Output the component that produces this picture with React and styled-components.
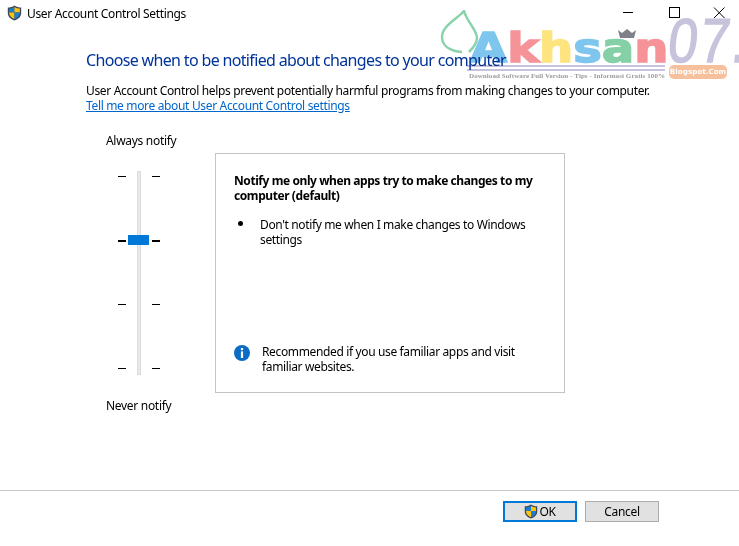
import React from "react";
import styled, { createGlobalStyle } from "styled-components";

const GlobalStyle = createGlobalStyle`
  html, body {
    margin: 0;
    background: #fff;
  }
  body {
    font-family: "Noto Sans", "Open Sans", "Liberation Sans", sans-serif;
    font-size: 12px;
    color: #000;
  }
`;

const Window = styled.div`
  position: relative;
  width: 739px;
  height: 546px;
  overflow: hidden;
  display: flex;
  flex-direction: column;
  background: #fff;
`;

const TitleBar = styled.div`
  height: 26px;
  display: flex;
  align-items: center;
  padding-left: 7px;
  gap: 5px;
  font-size: 12px;
  letter-spacing: -0.33px;
`;

const Controls = styled.div`
  margin-left: auto;
  display: flex;
  align-items: center;
  padding-right: 11px;
  gap: 28.5px;
  color: #000;
`;

const Main = styled.main`
  flex: 1;
  padding: 23px 0 0 86px;
`;

const Heading = styled.h1`
  margin: 0 0 12px;
  font-size: 16px;
  line-height: 22px;
  font-weight: 400;
  color: #003399;
  letter-spacing: -0.66px;
  white-space: nowrap;
`;

const Copy = styled.p`
  margin: 0;
  line-height: 15px;
  letter-spacing: -0.34px;
  white-space: nowrap;
`;

const MoreLink = styled.a`
  display: block;
  line-height: 15px;
  color: #0066cc;
  text-decoration: underline;
  letter-spacing: -0.34px;
`;

const Columns = styled.div`
  display: flex;
  margin-top: 20px;
`;

const SliderColumn = styled.div`
  width: 129px;
  padding-left: 20px;
  box-sizing: border-box;
  letter-spacing: -0.3px;
`;

const SliderLabel = styled.div`
  line-height: 16px;
`;

const Slider = styled.div`
  display: flex;
  height: 204px;
  margin: 22px 0 23px 12px;
  width: 42px;
  justify-content: space-between;
`;

const Ticks = styled.div`
  display: flex;
  flex-direction: column;
  justify-content: space-between;
  height: 193px;
  margin-top: 5px;
  width: 8px;
`;

const Tick = styled.span`
  display: block;
  width: 8px;
  height: ${(p) => (p.$active ? 2 : 1)}px;
  background: #000;
`;

const Track = styled.div`
  position: relative;
  width: 4px;
  height: 204px;
  background: #e7eae9;
  border: 1px solid #d9dcdb;
  box-sizing: border-box;
`;

const Thumb = styled.div`
  position: absolute;
  left: -10px;
  top: 63px;
  width: 21px;
  height: 10px;
  background: #0078d7;
`;

const Panel = styled.section`
  width: 350px;
  height: 240px;
  margin-top: 20px;
  box-sizing: border-box;
  border: 1px solid #c4c4c4;
  padding: 19px 18px 0;
  display: flex;
  flex-direction: column;
  letter-spacing: -0.36px;
`;

const PanelTitle = styled.div`
  font-weight: 700;
  line-height: 15px;
  letter-spacing: -0.42px;
  margin-bottom: 14px;
`;

const BulletRow = styled.div`
  display: flex;
  line-height: 15px;
`;

const Bullet = styled.span`
  width: 5px;
  height: 5px;
  border-radius: 50%;
  background: #000;
  margin: 4px 17px 0 4px;
  flex: none;
`;

const Note = styled.div`
  margin-top: auto;
  margin-bottom: 18px;
  display: flex;
  align-items: flex-start;
  gap: 12px;
  line-height: 15px;
`;

const Footer = styled.footer`
  border-top: 1px solid #c8c8c8;
  height: 56px;
  display: flex;
  justify-content: flex-end;
  gap: 8px;
  padding: 10px 80px 0 0;
  box-sizing: border-box;
`;

const Button = styled.button`
  width: 74px;
  height: 21px;
  box-sizing: border-box;
  padding: 0;
  display: flex;
  align-items: center;
  justify-content: center;
  gap: 1px;
  background: #e1e1e1;
  border: ${(p) => (p.$primary ? "2px solid #0078d7" : "1px solid #adadad")};
  font: inherit;
  letter-spacing: -0.3px;
  color: #000;
`;

const Watermark = styled.div`
  position: absolute;
  left: 438px;
  top: 10px;
  width: 301px;
  height: 72px;
  pointer-events: none;
  mix-blend-mode: multiply;
`;

const Leaf = styled.svg`
  position: absolute;
  left: 0;
  top: 0;
`;

const Brand = styled.div`
  position: absolute;
  left: 32px;
  top: 16px;
  display: flex;
  align-items: baseline;
  font-family: "DejaVu Sans", sans-serif;
  font-weight: 700;
  font-size: 40px;
  line-height: 44px;
  transform: scaleX(1.2);
  transform-origin: left center;
  -webkit-text-stroke: 1.5px currentColor;
`;

const Letter = styled.span`
  color: ${(p) => p.$color};
`;

const Seven = styled.div`
  position: absolute;
  left: 227px;
  top: 0;
  font-family: "Liberation Sans", sans-serif;
  font-size: 62px;
  line-height: 62px;
  color: #c8c3dc;
  letter-spacing: 3px;
  white-space: nowrap;
  transform: scaleX(0.85) skewX(-8deg);
  transform-origin: left bottom;
  -webkit-text-stroke: 1.5px #c8c3dc;
`;

const Crown = styled.svg`
  position: absolute;
  left: 179px;
  top: 18px;
`;

const Rule = styled.div`
  position: absolute;
  left: 29px;
  top: 55px;
  width: 198px;
  height: 2px;
  border-top: 2px solid #c8c3dc;
  border-bottom: 2px solid #c8c3dc;
`;

const Tagline = styled.div`
  position: absolute;
  left: 31px;
  top: 62px;
  font-family: "Liberation Serif", serif;
  font-weight: 700;
  font-size: 7px;
  line-height: 8px;
  letter-spacing: 0.08px;
  color: #9b9b9b;
  white-space: nowrap;
`;

const Pill = styled.div`
  position: absolute;
  left: 231px;
  top: 55px;
  width: 58px;
  height: 14px;
  border-radius: 5px;
  background: #f6c09c;
  color: #fff;
  font-family: "DejaVu Sans", sans-serif;
  font-weight: 700;
  font-size: 7.2px;
  line-height: 14px;
  text-align: center;
`;

function Shield({ size = 15 }) {
  return (
    <svg width={size} height={size + 1} viewBox="0 0 15 16">
      <path d="M7.5 0.4C5.4 1.8 3 2.4 0.8 2.4V8c0 3.7 3 6.2 6.7 7.6 3.7-1.4 6.7-3.9 6.7-7.6V2.4C12 2.4 9.6 1.8 7.5 0.4z" fill="#3d4a5c" />
      <path d="M7.5 2v5.4H2.2V3.6C4 3.5 5.9 3 7.5 2z" fill="#1c7fc9" />
      <path d="M7.5 2c1.6 1 3.5 1.5 5.3 1.6v3.8H7.5z" fill="#ffc20e" />
      <path d="M2.2 7.4h5.3v6.7C4.7 13 2.2 11 2.2 8z" fill="#ffc20e" />
      <path d="M7.5 7.4h5.3V8c0 3-2.5 5-5.3 6.1z" fill="#1c7fc9" />
    </svg>
  );
}

function InfoIcon() {
  return (
    <svg width="16" height="16" viewBox="0 0 16 16" style={{ flex: "none", marginTop: "1px" }}>
      <circle cx="8" cy="8" r="8" fill="#0a6cc4" />
      <rect x="6.9" y="3" width="2.2" height="2.2" fill="#fff" />
      <rect x="6.9" y="6.4" width="2.2" height="6.6" fill="#fff" />
    </svg>
  );
}

function WindowButtons() {
  return (
    <Controls>
      <svg width="17" height="12" viewBox="0 0 17 12">
        <path d="M3 5.5h10" stroke="#000" fill="none" />
      </svg>
      <svg width="17" height="12" viewBox="0 0 17 12">
        <rect x="3.5" y="0.5" width="10" height="10" stroke="#000" fill="none" />
      </svg>
      <svg width="17" height="12" viewBox="0 0 17 12">
        <path d="M3 0.5l10.5 10.5M13.5 0.5L3 11" stroke="#000" fill="none" />
      </svg>
    </Controls>
  );
}

const brandLetters = [
  ["A", "#7fc6ee"],
  ["k", "#f59398"],
  ["h", "#fde47f"],
  ["s", "#7fc6ee"],
  ["a", "#85d0a6"],
  ["n", "#f59398"],
];

function BlogWatermark() {
  return (
    <Watermark>
      <Leaf width="42" height="46" viewBox="0 0 42 46">
        <path
          d="M24 42C12 41 4 36 4 27 4 16 18 10 26 1c3 11 13 19 13 27 0 5-3 9-8 14"
          fill="none"
          stroke="#88d3a9"
          strokeWidth="2.5"
        />
      </Leaf>
      <Seven>07.</Seven>
      <Brand>
        {brandLetters.map(([ch, color], i) => (
          <Letter key={i} $color={color}>{ch}</Letter>
        ))}
      </Brand>
      <Crown width="20" height="11" viewBox="0 0 20 11">
        <path d="M1 2l4 3 5-4 5 4 4-3-2 8H3z" fill="#7f8088" />
      </Crown>
      <Rule />
      <Tagline>Download Software Full Version - Tips - Informasi Gratis 100%</Tagline>
      <Pill>Blogspot.Com</Pill>
    </Watermark>
  );
}

export default function App() {
  return (
    <>
      <GlobalStyle />
      <Window>
        <TitleBar>
          <Shield />
          <span>User Account Control Settings</span>
          <WindowButtons />
        </TitleBar>
        <Main>
          <Heading>Choose when to be notified about changes to your computer</Heading>
          <Copy>User Account Control helps prevent potentially harmful programs from making changes to your computer.</Copy>
          <MoreLink href="#">Tell me more about User Account Control settings</MoreLink>
          <Columns>
            <SliderColumn>
              <SliderLabel>Always notify</SliderLabel>
              <Slider>
                <Ticks>
                  <Tick />
                  <Tick $active />
                  <Tick />
                  <Tick />
                </Ticks>
                <Track>
                  <Thumb />
                </Track>
                <Ticks>
                  <Tick />
                  <Tick $active />
                  <Tick />
                  <Tick />
                </Ticks>
              </Slider>
              <SliderLabel>Never notify</SliderLabel>
            </SliderColumn>
            <Panel>
              <PanelTitle>
                Notify me only when apps try to make changes to my
                <br />
                computer (default)
              </PanelTitle>
              <BulletRow>
                <Bullet />
                <span>
                  Don't notify me when I make changes to Windows
                  <br />
                  settings
                </span>
              </BulletRow>
              <Note>
                <InfoIcon />
                <span>
                  Recommended if you use familiar apps and visit
                  <br />
                  familiar websites.
                </span>
              </Note>
            </Panel>
          </Columns>
        </Main>
        <Footer>
          <Button $primary>
            <Shield size={14} />
            OK
          </Button>
          <Button>Cancel</Button>
        </Footer>
        <BlogWatermark />
      </Window>
    </>
  );
}
